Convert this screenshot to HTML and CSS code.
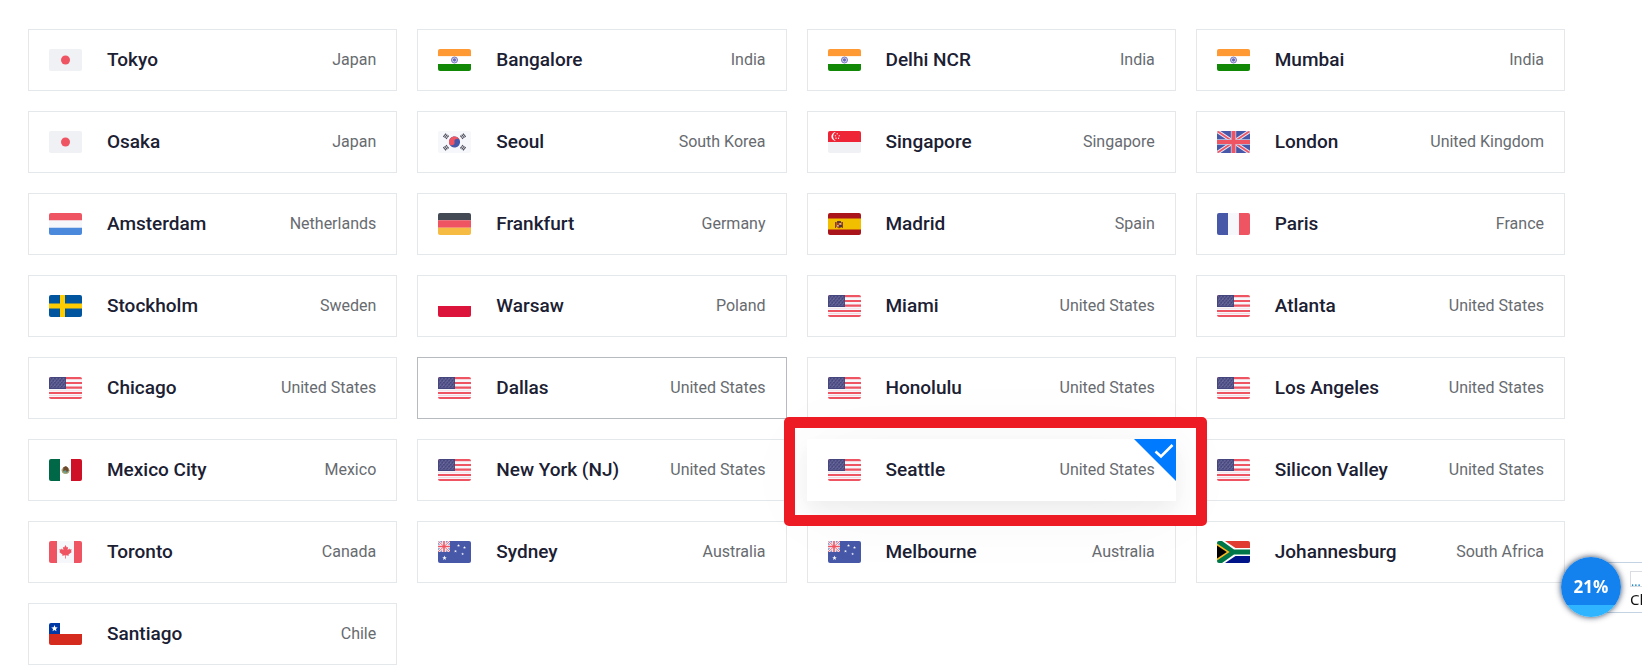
FILE: index.html
```html
<!DOCTYPE html>
<html lang="en">
<head>
<meta charset="utf-8">
<meta name="viewport" content="width=device-width, initial-scale=1">
<title>Server locations</title>
<link rel="stylesheet" href="styles.css">
</head>
<body>
<svg class="sprite" aria-hidden="true">
  <defs>
    <pattern id="stars" width="3.4" height="4" patternUnits="userSpaceOnUse"><path d="M.4.8h1v.8h-1zM2.1 2.7h1v.8h-1zM2.1.1h.6v.6h-.6zM.4 2h.6v.6H.4z" fill="#a9a8c8"/></pattern>
    <path id="star" d="M0-1 .26-.35.95-.31.42.13.59.81 0 .44-.59.81-.42.13-.95-.31-.26-.35z"/>
    <g id="bars"><path d="M-2.1-1.7h4.2M-2.1 0h4.2M-2.1 1.7h4.2" stroke="#464655" stroke-width="1.1"/><path d="M0-2.2v4.4" stroke="#f5f7fb" stroke-width=".35"/></g>
  </defs>
  <symbol id="jp" viewBox="0 0 33 22"><path fill="#f0f1f5" d="M0 0h33v22H0z"/><circle cx="16.5" cy="11" r="4.5" fill="#ef5463"/></symbol>
  <symbol id="in" viewBox="0 0 33 22"><path fill="#fff" d="M0 0h33v22H0z"/><path fill="#ff9933" d="M0 0h33v7H0z"/><path fill="#128807" d="M0 15h33v7H0z"/><path fill="#ffe6ca" d="M0 7h33v.5H0z"/><circle cx="16.5" cy="11" r="3" fill="#e4e4f5" stroke="#5556ad" stroke-width=".8"/><circle cx="16.5" cy="11" r="1.4" fill="#4748a5"/><path d="M14 11h5M16.5 8.5v5M14.8 9.3l3.4 3.4M18.2 9.3l-3.4 3.4" stroke="#7778c0" stroke-width=".4"/></symbol>
  <symbol id="kr" viewBox="0 0 33 22"><path fill="#f5f7fb" d="M0 0h33v22H0z"/><g transform="rotate(-10 16.5 11)"><circle cx="16.5" cy="11" r="5.6" fill="#4758a9"/><path d="M10.9 11a5.6 5.6 0 0 1 11.2 0 2.8 2.8 0 0 0-5.6 0 2.8 2.8 0 0 1-5.6 0z" fill="#ef5463"/></g><use href="#bars" transform="translate(8 5.3) rotate(-52)"/><use href="#bars" transform="translate(25 5.3) rotate(52)"/><use href="#bars" transform="translate(8 16.7) rotate(52)"/><use href="#bars" transform="translate(25 16.7) rotate(-52)"/></symbol>
  <symbol id="sg" viewBox="0 0 33 22"><path fill="#f0f1f5" d="M0 0h33v22H0z"/><path fill="#ee2536" d="M0 0h33v11H0z"/><path fill="#fff" d="M7.8 1.1a4.4 4.4 0 1 0 0 8.8 4.9 4.9 0 0 1 0-8.8z"/><g fill="#fff"><use href="#star" transform="translate(9.2 2.8)"/><use href="#star" transform="translate(7.4 4.8)"/><use href="#star" transform="translate(11.2 4.8)"/><use href="#star" transform="translate(8 7.2)"/><use href="#star" transform="translate(10.5 7.2)"/></g></symbol>
  <symbol id="gb" viewBox="0 0 33 22"><path fill="#4758a9" d="M0 0h33v22H0z"/><path d="M0 0l33 22M33 0L0 22" stroke="#e3e6f5" stroke-width="3.8"/><path d="M0 0l33 22M33 0L0 22" stroke="#ef5463" stroke-width="1.8"/><path d="M16.5 0v22M0 11h33" stroke="#c9cee8" stroke-width="5.4"/><path d="M16.5 0v22M0 11h33" stroke="#ef5463" stroke-width="3.8"/></symbol>
  <symbol id="nl" viewBox="0 0 33 22"><path fill="#f5f7fb" d="M0 0h33v22H0z"/><path fill="#ef5463" d="M0 0h33v7.3H0z"/><path fill="#4a89dc" d="M0 14.7h33V22H0z"/></symbol>
  <symbol id="de" viewBox="0 0 33 22"><path fill="#434a54" d="M0 0h33v7.3H0z"/><path fill="#ef5463" d="M0 7.3h33v7.4H0z"/><path fill="#f6bb42" d="M0 14.7h33V22H0z"/></symbol>
  <symbol id="es" viewBox="0 0 33 22"><path fill="#aa151b" d="M0 0h33v22H0z"/><path fill="#f1bf00" d="M0 5.4h33v11.2H0z"/><path fill="#8b4316" d="M7 9h1v6H7zM14 9h1v6h-1z"/><path fill="#a54820" d="M8.2 9.3l2.8-1.6 2.8 1.6v4.5L11 15.5l-2.8-1.7z"/><path fill="#4c3538" d="M9 8.3h4v1.5H9zM11 12h3v2.3h-3z"/><path fill="#d8b4a4" d="M11.3 10h1.8v1.8h-1.8zM9 12h1.7v1.6H9z"/></symbol>
  <symbol id="fr" viewBox="0 0 33 22"><path fill="#f5f7fb" d="M0 0h33v22H0z"/><path fill="#4758a9" d="M0 0h11v22H0z"/><path fill="#ef5463" d="M22 0h11v22H22z"/></symbol>
  <symbol id="se" viewBox="0 0 33 22"><path fill="#00559e" d="M0 0h33v22H0z"/><path fill="#fecc00" d="M11 0h5v22h-5zM0 8.6h33v4.8H0z"/></symbol>
  <symbol id="pl" viewBox="0 0 33 22"><path fill="#fff" d="M0 0h33v11H0z"/><path fill="#dc143c" d="M0 11h33v11H0z"/></symbol>
  <symbol id="us" viewBox="0 0 33 22"><path fill="#f5f7fb" d="M0 0h33v22H0z"/><path fill="#ef5463" d="M0 0h33v2H0zM0 5h33v2H0zM0 9.6h33v2.1H0zM0 15h33v2H0zM0 20h33v2H0z"/><path fill="#f6b5c0" d="M0 2h33v.4H0zM0 13.400h33v.4H0zM0 18.4h33v.6H0z"/><path fill="#46467f" d="M0 0h17v12H0z"/><path fill="url(#stars)" d="M1 1h15.3v10H1z"/></symbol>
  <symbol id="mx" viewBox="0 0 33 22"><path fill="#fff" d="M0 0h33v22H0z"/><path fill="#006847" d="M0 0h11v22H0z"/><path fill="#ce1126" d="M22 0h11v22H22z"/><circle cx="16.5" cy="11.2" r="3.5" fill="#a89b78"/><path d="M12.8 10.6a3.8 3.8 0 1 0 7.6.2" fill="none" stroke="#9aa56c" stroke-width="1"/><path fill="#6d4a2c" d="M14.4 8.3l2.6-1.2 2.2 1.8.5 2.6-2.2 2-1.1-2.2-2.2 1.2z"/><path fill="#4fa0a0" d="M15.2 11.8h2.3v1.6h-2.3z"/></symbol>
  <symbol id="ca" viewBox="0 0 33 22"><path fill="#f5f7fb" d="M0 0h33v22H0z"/><path fill="#ef5463" d="M0 0h8v22H0zM25 0h8v22h-8z"/><path fill="#ef5463" d="M16.5 4.1l1.3 2.3 1.3-.5-.5 3.3 1.7-1.6.5.9 1.9-.2-.7 2 .8.7-3.3 2.5.3 1.2-3-.4.1 3.3h-.8l.1-3.3-3 .4.3-1.2-3.3-2.5.8-.7-.7-2 1.9.2.5-.9 1.7 1.6-.5-3.3 1.3.5z"/></symbol>
  <symbol id="cl" viewBox="0 0 33 22"><path fill="#fff" d="M0 0h33v22H0z"/><path fill="#0039a6" d="M0 0h11v11H0z"/><path fill="#d52b1e" d="M0 11h33v11H0z"/><use href="#star" fill="#fff" transform="translate(5.5 5.5) scale(3.4)"/></symbol>
  <symbol id="au" viewBox="0 0 33 22"><path fill="#4758a9" d="M0 0h33v22H0z"/><path fill="#f5f7fb" d="M0 0h12v11H0z"/><path d="M1.8 0h2.4v2.3zM7.8 0h2.4L7.8 2.3zM1.8 11h2.4V8.7zM7.8 11h2.4L7.8 8.7zM0 1.4v2.4h2.4zM12 1.4v2.4H9.6zM0 9.6V7.2h2.4zM12 9.6V7.2H9.6z" fill="#8995cb"/><path d="M0 0l12 11M12 0L0 11" stroke="#ef5463" stroke-width=".9"/><path d="M6 0v11M0 5.5h12" stroke="#ef5463" stroke-width="1.6"/><g fill="#f5f7fb"><use href="#star" transform="translate(6.5 17) scale(2.4)"/><use href="#star" transform="translate(20.5 4.5) scale(1.5)"/><use href="#star" transform="translate(26.5 6.5) scale(1.5)"/><use href="#star" transform="translate(17.5 10.2) scale(1.5)"/><use href="#star" transform="translate(24.6 13) scale(1.4)"/></g></symbol>
  <symbol id="za" viewBox="0 0 33 22"><path fill="#fff" d="M0 0h33v22H0z"/><path fill="#e03c31" d="M8 0h25v7H18.5z"/><path fill="#001489" d="M8 22h25v-7H18.5z"/><path fill="#007749" d="M0 0h5l12 8.5h16v5H17L5 22H0z"/><path fill="#ffb81c" d="M0 2.6L12.6 11 0 19.4z"/><path fill="#000" d="M0 4.6L9.8 11 0 17.4z"/></symbol>
</svg>

<main class="locations">
  <ul class="grid">
    <li><button class="card" type="button"><svg class="flag" aria-hidden="true"><use href="#jp"/></svg><span class="city">Tokyo</span><span class="country">Japan</span></button></li>
    <li><button class="card" type="button"><svg class="flag" aria-hidden="true"><use href="#in"/></svg><span class="city">Bangalore</span><span class="country">India</span></button></li>
    <li><button class="card" type="button"><svg class="flag" aria-hidden="true"><use href="#in"/></svg><span class="city">Delhi NCR</span><span class="country">India</span></button></li>
    <li><button class="card" type="button"><svg class="flag" aria-hidden="true"><use href="#in"/></svg><span class="city">Mumbai</span><span class="country">India</span></button></li>
    <li><button class="card" type="button"><svg class="flag" aria-hidden="true"><use href="#jp"/></svg><span class="city">Osaka</span><span class="country">Japan</span></button></li>
    <li><button class="card" type="button"><svg class="flag" aria-hidden="true"><use href="#kr"/></svg><span class="city">Seoul</span><span class="country">South Korea</span></button></li>
    <li><button class="card" type="button"><svg class="flag" aria-hidden="true"><use href="#sg"/></svg><span class="city">Singapore</span><span class="country">Singapore</span></button></li>
    <li><button class="card" type="button"><svg class="flag" aria-hidden="true"><use href="#gb"/></svg><span class="city">London</span><span class="country">United Kingdom</span></button></li>
    <li><button class="card" type="button"><svg class="flag" aria-hidden="true"><use href="#nl"/></svg><span class="city">Amsterdam</span><span class="country">Netherlands</span></button></li>
    <li><button class="card" type="button"><svg class="flag" aria-hidden="true"><use href="#de"/></svg><span class="city">Frankfurt</span><span class="country">Germany</span></button></li>
    <li><button class="card" type="button"><svg class="flag" aria-hidden="true"><use href="#es"/></svg><span class="city">Madrid</span><span class="country">Spain</span></button></li>
    <li><button class="card" type="button"><svg class="flag" aria-hidden="true"><use href="#fr"/></svg><span class="city">Paris</span><span class="country">France</span></button></li>
    <li><button class="card" type="button"><svg class="flag" aria-hidden="true"><use href="#se"/></svg><span class="city">Stockholm</span><span class="country">Sweden</span></button></li>
    <li><button class="card" type="button"><svg class="flag" aria-hidden="true"><use href="#pl"/></svg><span class="city">Warsaw</span><span class="country">Poland</span></button></li>
    <li><button class="card" type="button"><svg class="flag" aria-hidden="true"><use href="#us"/></svg><span class="city">Miami</span><span class="country">United States</span></button></li>
    <li><button class="card" type="button"><svg class="flag" aria-hidden="true"><use href="#us"/></svg><span class="city">Atlanta</span><span class="country">United States</span></button></li>
    <li><button class="card" type="button"><svg class="flag" aria-hidden="true"><use href="#us"/></svg><span class="city">Chicago</span><span class="country">United States</span></button></li>
    <li><button class="card card-active" type="button"><svg class="flag" aria-hidden="true"><use href="#us"/></svg><span class="city">Dallas</span><span class="country">United States</span></button></li>
    <li><button class="card" type="button"><svg class="flag" aria-hidden="true"><use href="#us"/></svg><span class="city">Honolulu</span><span class="country">United States</span></button></li>
    <li><button class="card" type="button"><svg class="flag" aria-hidden="true"><use href="#us"/></svg><span class="city">Los Angeles</span><span class="country">United States</span></button></li>
    <li><button class="card" type="button"><svg class="flag" aria-hidden="true"><use href="#mx"/></svg><span class="city">Mexico City</span><span class="country">Mexico</span></button></li>
    <li><button class="card" type="button"><svg class="flag" aria-hidden="true"><use href="#us"/></svg><span class="city">New York (NJ)</span><span class="country">United States</span></button></li>
    <li class="selected"><button class="card card-selected" type="button" aria-pressed="true"><svg class="flag" aria-hidden="true"><use href="#us"/></svg><span class="city">Seattle</span><span class="country">United States</span></button>
      <svg class="corner" viewBox="0 0 42 42" aria-hidden="true"><path d="M0 0h42v42z" fill="#007bff"/><path d="M21.5 12.5l5.5 5L38.5 6" fill="none" stroke="#fff" stroke-width="2.6"/></svg>
      <span class="frame"></span></li>
    <li><button class="card" type="button"><svg class="flag" aria-hidden="true"><use href="#us"/></svg><span class="city">Silicon Valley</span><span class="country">United States</span></button></li>
    <li><button class="card" type="button"><svg class="flag" aria-hidden="true"><use href="#ca"/></svg><span class="city">Toronto</span><span class="country">Canada</span></button></li>
    <li><button class="card" type="button"><svg class="flag" aria-hidden="true"><use href="#au"/></svg><span class="city">Sydney</span><span class="country">Australia</span></button></li>
    <li><button class="card" type="button"><svg class="flag" aria-hidden="true"><use href="#au"/></svg><span class="city">Melbourne</span><span class="country">Australia</span></button></li>
    <li><button class="card" type="button"><svg class="flag" aria-hidden="true"><use href="#za"/></svg><span class="city">Johannesburg</span><span class="country">South Africa</span></button></li>
    <li><button class="card" type="button"><svg class="flag" aria-hidden="true"><use href="#cl"/></svg><span class="city">Santiago</span><span class="country">Chile</span></button></li>
  </ul>
</main>

<aside class="monitor">
  <div class="tray"><span class="tray-box">...</span><span class="tray-text">Cl</span></div>
  <div class="bubble">21%</div>
</aside>
</body>
</html>
```
FILE: styles.css
```css
* {
  box-sizing: border-box;
}

body {
  margin: 0;
  background: #fff;
  font-family: Roboto, "Liberation Sans", sans-serif;
  overflow: hidden;
}

.sprite {
  position: absolute;
  width: 0;
  height: 0;
}

.locations {
  padding: 29px 77px 0 28px;
}

.grid {
  display: grid;
  grid-template-columns: repeat(4, minmax(0, 1fr));
  gap: 20px;
  margin: 0;
  padding: 0;
  list-style: none;
}

.card {
  display: flex;
  align-items: center;
  width: 100%;
  padding: 18px 20px;
  border: 1px solid #e5e8eb;
  border-radius: 0;
  background: #fff;
  font-family: inherit;
  text-align: left;
}

.card-active {
  border-color: #b7babe;
}

.card-selected {
  border-color: #fff;
  box-shadow: 0 10px 20px rgba(10, 25, 45, 0.05), 0 6px 80px rgba(0, 0, 0, 0.05);
}

.flag {
  flex: none;
  width: 33px;
  height: 22px;
  margin-right: 25px;
  border-radius: 2px;
}

.city {
  flex: 1;
  color: #1b2033;
  font-size: 19px;
  font-weight: 500;
  line-height: 24px;
}

.country {
  color: #676b70;
  font-size: 16px;
  line-height: 24px;
}

.selected {
  position: relative;
  z-index: 1;
}

.corner {
  position: absolute;
  top: 0;
  right: 0;
  width: 42px;
  height: 42px;
}

.frame {
  position: absolute;
  inset: -22px -31px -25px -23px;
  border: 11px solid #ed1c24;
  border-radius: 5px;
  pointer-events: none;
}

.monitor {
  position: fixed;
  z-index: 2;
  top: 557px;
  right: 0;
  width: 81px;
  height: 60px;
}

.tray {
  position: absolute;
  top: 5px;
  right: -40px;
  display: flex;
  flex-direction: column;
  width: 92px;
  height: 51px;
  padding: 8px 0 0 39px;
  border: 1px solid #c3d3e3;
  background: #fff;
  font-family: "Noto Sans", sans-serif;
}

.tray-box {
  width: 40px;
  height: 16px;
  border: 1px solid #d9dde1;
  color: #1683c6;
  font-size: 12px;
  line-height: 19px;
}

.tray-text {
  color: #111;
  font-size: 15px;
  line-height: 24px;
}

.bubble {
  position: absolute;
  top: 0;
  left: 0;
  width: 60px;
  height: 60px;
  border-radius: 50%;
  background: linear-gradient(#1482ee 80%, #2fb4ff 80%);
  box-shadow: 0 0 6px rgba(0, 20, 50, 0.8);
  color: #fff;
  font: 700 17px/60px "Open Sans", "Noto Sans", sans-serif;
  text-align: center;
}
```
